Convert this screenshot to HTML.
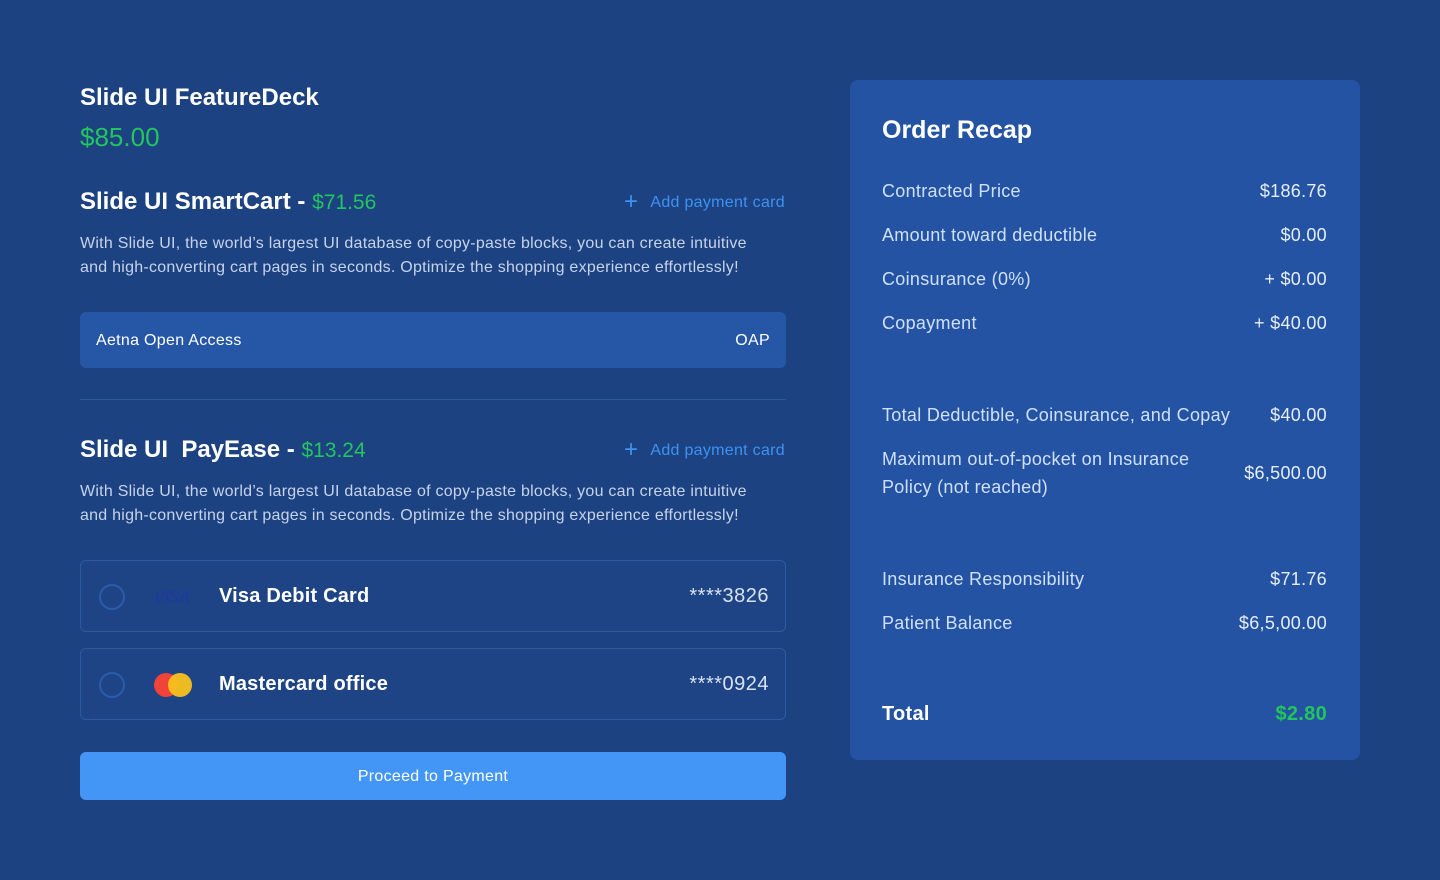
<!DOCTYPE html>
<html><head><meta charset="utf-8"><style>
*{box-sizing:border-box;margin:0;padding:0}
body{width:1440px;height:880px;background:#1d4282;font-family:"Liberation Sans",sans-serif;color:#fff;position:relative;overflow:hidden}
.a{position:absolute}
.h{font-size:24px;font-weight:bold;letter-spacing:0px}
.g{color:#22c55e}
.link{color:#3d92f2;font-size:16px;letter-spacing:0.3px}
.p{font-size:16px;line-height:24px;color:#c6d3ea;width:692px;letter-spacing:0.25px}
.card{position:absolute;left:80px;width:706px;height:72px;border:1px solid #2e5aa0;border-radius:6px;background:#1e4485}
.rad{position:absolute;left:18px;top:23px;width:26px;height:26px;border:2px solid #2b5cab;border-radius:50%}
.cn{position:absolute;left:138px;top:24px;font-size:20px;font-weight:bold;letter-spacing:0.2px}
.num{position:absolute;right:16px;top:24px;font-size:20px;color:#d8e2f2;letter-spacing:0.5px}
.row{position:absolute;left:882px;width:445px;font-size:18px;color:#cfe0fb;display:flex;justify-content:space-between;letter-spacing:0.3px}
.row span:last-child{color:#e6eefb}
</style></head><body>
<div class="a h" style="left:80px;top:84px">Slide UI FeatureDeck</div>
<div class="a g" style="left:80px;top:122px;font-size:26px">$85.00</div>

<div class="a h" style="left:80px;top:188px">Slide UI SmartCart - <span class="g" style="font-weight:normal;font-size:21px">$71.56</span></div>
<div class="a link" style="right:655px;top:186px"><span style="font-size:24px;position:relative;top:2px;margin-right:12px">+</span>Add payment card</div>
<div class="a p" style="left:80px;top:232px">With Slide UI, the world’s largest UI database of copy-paste blocks, you can create intuitive and high-converting cart pages in seconds. Optimize the shopping experience effortlessly!</div>
<div class="a" style="left:80px;top:312px;width:706px;height:56px;background:#2656a6;border-radius:6px;font-size:16px;letter-spacing:0.3px">
<span class="a" style="left:16px;top:20px">Aetna Open Access</span><span class="a" style="right:16px;top:20px">OAP</span></div>
<div class="a" style="left:80px;top:399px;width:706px;height:1px;background:#2c589c"></div>

<div class="a h" style="left:80px;top:436px">Slide UI&nbsp; PayEase - <span class="g" style="font-weight:normal;font-size:21px">$13.24</span></div>
<div class="a link" style="right:655px;top:434px"><span style="font-size:24px;position:relative;top:2px;margin-right:12px">+</span>Add payment card</div>
<div class="a p" style="left:80px;top:480px">With Slide UI, the world’s largest UI database of copy-paste blocks, you can create intuitive and high-converting cart pages in seconds. Optimize the shopping experience effortlessly!</div>

<div class="card" style="top:560px"><div class="rad"></div>
<div class="a" style="left:73px;top:26px;font-size:17px;font-style:italic;font-weight:bold;color:#1f3b9a;letter-spacing:-1px">VISA</div>
<div class="cn">Visa Debit Card</div><div class="num">****3826</div></div>
<div class="card" style="top:648px"><div class="rad"></div>
<div class="a" style="left:73px;top:24px;width:24px;height:24px;border-radius:50%;background:#f0433a"></div>
<div class="a" style="left:87px;top:24px;width:24px;height:24px;border-radius:50%;background:#f8c21c;opacity:.95"></div>
<div class="cn">Mastercard office</div><div class="num">****0924</div></div>

<div class="a" style="left:80px;top:752px;width:706px;height:48px;background:#4396f5;border-radius:6px;text-align:center;line-height:50px;font-size:16px;letter-spacing:0.3px">Proceed to Payment</div>

<div class="a" style="left:850px;top:80px;width:510px;height:680px;background:#2453a3;border-radius:8px"></div>
<div class="a" style="left:882px;top:116px;font-size:25px;font-weight:bold">Order Recap</div>
<div class="row" style="top:181px"><span>Contracted Price</span><span>$186.76</span></div>
<div class="row" style="top:225px"><span>Amount toward deductible</span><span>$0.00</span></div>
<div class="row" style="top:269px"><span>Coinsurance (0%)</span><span>+ $0.00</span></div>
<div class="row" style="top:313px"><span>Copayment</span><span>+ $40.00</span></div>
<div class="row" style="top:405px"><span>Total Deductible, Coinsurance, and Copay</span><span>$40.00</span></div>
<div class="row" style="top:445px;line-height:28px;align-items:center"><span>Maximum out-of-pocket on Insurance<br>Policy (not reached)</span><span>$6,500.00</span></div>
<div class="row" style="top:569px"><span>Insurance Responsibility</span><span>$71.76</span></div>
<div class="row" style="top:613px"><span>Patient Balance</span><span>$6,5,00.00</span></div>
<div class="row" style="top:703px;font-size:20px;font-weight:bold"><span style="color:#fff">Total</span><span style="color:#22c55e">$2.80</span></div>
</body></html>
